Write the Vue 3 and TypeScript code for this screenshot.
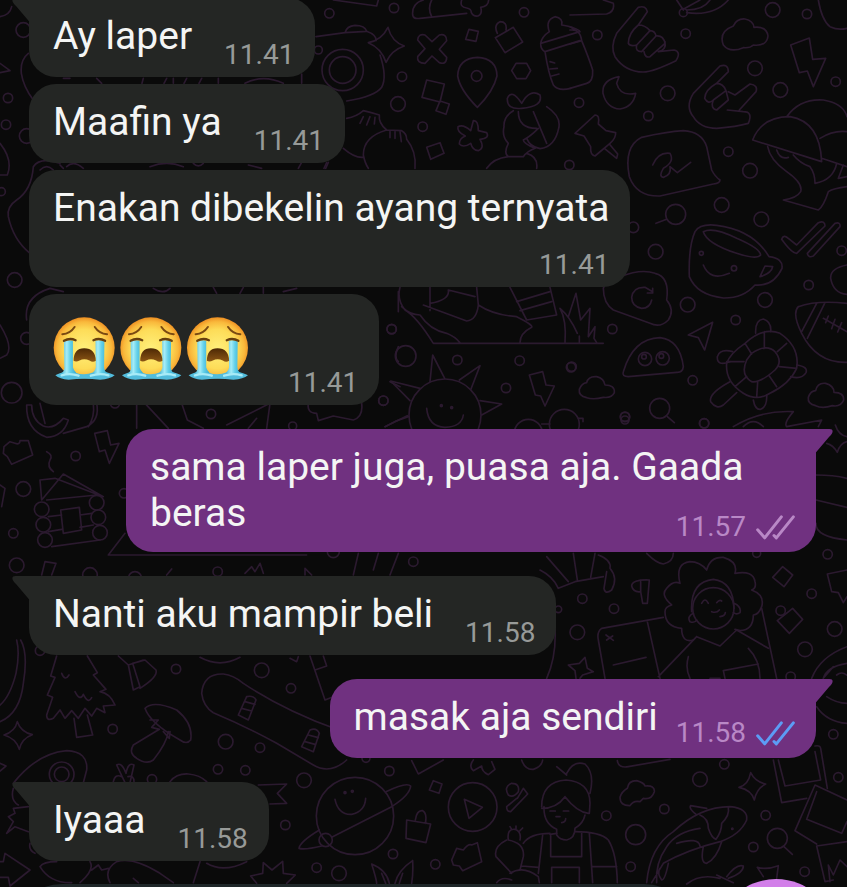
<script setup lang="ts">
interface Message {
  id: number
  text?: string
  emoji?: number
  time: string
  mine?: boolean
  receipt?: 'delivered' | 'read'
  first?: boolean
  layout?: 'stacked' | 'wrapped'
}

interface Panel {
  x: number
  y: number
  circles: number[][]
  paths: string[]
}

const messages: Message[] = [
  { id: 1, text: 'Ay laper', time: '11.41', first: true },
  { id: 2, text: 'Maafin ya', time: '11.41' },
  { id: 3, text: 'Enakan dibekelin ayang ternyata', time: '11.41', layout: 'stacked' },
  { id: 4, emoji: 3, time: '11.41' },
  { id: 5, text: 'sama laper juga, puasa aja. Gaada beras', time: '11.57', mine: true, receipt: 'delivered', first: true, layout: 'wrapped' },
  { id: 6, text: 'Nanti aku mampir beli', time: '11.58', first: true },
  { id: 7, text: 'masak aja sendiri', time: '11.58', mine: true, receipt: 'read', first: true },
  { id: 8, text: 'Iyaaa', time: '11.58', first: true },
]

// Wallpaper doodles, grouped by region; each region is drawn at three units per pixel.
const panels: Panel[] = [
  {
    x: 0, y: 0,
    circles: [[70, 90, 22], [24, 294, 14], [18, 374, 14], [80, 408, 22], [4, 575, 12], [44, 840, 22]],
    paths: [
      'M0 50Q30 45 35 20M0 190L30 212 0 218M85 160Q60 180 64 220Q70 260 100 300M0 430Q40 480 22 525L0 525',
      'M180 490Q120 470 100 500Q95 570 50 600Q20 620 25 650Q40 720 90 760M120 510q20-20 40 0',
      'M190 235h20M290 235l15 15M430 235l-4 15M500 235l-8 15M520 235v15M560 235l-8 15M605 235l-8 15M655 235v15M735 250Q790 222 850 250M905 222v28',
      'M180 495l10 10M200 500q20-20 50 5M450 500q50-20 100 0M580 490q15 15 30 0M745 495l40 10M895 505l10-18M980 488l-8 17',
    ],
  },
  {
    x: 300, y: 0,
    circles: [[88, 40, 14], [282, 24, 14], [672, 37, 14], [306, 230, 14], [294, 312, 22], [368, 380, 14], [808, 495, 14], [55, 150, 12], [128, 210, 62], [128, 210, 40], [530, 228, 16]],
    paths: [
      'M100 0L230 18 235 0M370 0Q335 10 338 45Q340 58 360 55L500 40M395 0Q382 25 395 50M485 0Q478 22 500 24Q514 26 514 38Q520 50 534 48Q548 42 542 22Q565 20 566 0',
      'M48 110L135 98Q140 78 165 76Q195 76 200 94Q230 105 228 122M240 165Q262 230 245 262Q225 290 140 303M135 98L200 94',
      'M264 82Q275 125 313 138Q275 150 258 187Q245 145 205 128Q245 120 264 82Z',
      'M353 120Q355 100 375 105L396 125 418 105Q440 100 440 122L418 148 440 172Q440 195 418 188L396 168 375 190Q350 190 353 170L375 146Z',
      'M507 88L535 94 528 124 497 118ZM586 113L640 82 668 126 615 158ZM592 100Q580 75 600 65Q622 65 618 90',
      'M532 322Q480 270 473 228Q475 175 532 172Q590 175 591 228Q580 275 532 322Z',
      'M648 190L680 190 692 212 678 236 650 236 635 212ZM380 240L433 252 420 306 366 292ZM420 303L448 312 438 343 408 332ZM380 442L420 428 432 460 392 478Z',
      'M748 95Q735 60 765 50Q790 55 785 75Q820 80 838 92M748 95Q725 110 722 130L840 95M722 130Q722 150 735 155L840 122M735 155Q745 220 760 255Q775 275 812 265M750 185l14 4M750 207l22-2M755 228l22-6',
      'M520 362Q535 360 535 392L560 398Q570 415 540 418Q555 445 535 452Q518 452 512 430Q490 445 478 432Q478 415 496 408Q470 395 474 380Q490 372 512 392Z',
      'M665 325Q620 330 622 295Q635 265 665 310Q690 265 720 285Q730 320 665 325M640 332Q610 350 612 380Q605 410 625 430Q610 460 625 470L670 470Q680 455 705 445Q670 430 670 420Q690 410 715 385M655 335Q655 385 710 385M740 320Q785 350 776 385Q765 440 720 446Q690 440 680 415M700 335L740 430M625 470Q580 475 560 505M680 460Q715 470 710 505',
      'M140 355Q170 350 190 332Q215 338 238 345Q235 370 260 390M190 350l-10 20M210 350l-10 25M225 352l-2 20M260 390Q190 410 190 465Q195 490 205 505M260 390L305 392Q320 400 320 418Q350 455 345 505M270 395v18M285 395v20M300 395l4 30M130 445Q165 475 190 472M85 487l-8 18',
    ],
  },
  {
    x: 570, y: 0,
    circles: [[608, 30, 22], [711, 42, 14], [347, 101, 14], [82, 105, 14], [555, 205, 22], [631, 270, 22], [797, 245, 14], [293, 280, 22], [235, 348, 14], [27, 308, 14], [475, 455, 14], [540, 512, 22], [455, 615, 22], [317, 643, 30], [574, 658, 22], [340, 38, 12]],
    paths: [
      'M0 45L110 42Q135 35 130 10L100 0M320 0l20 30M345 25L390 0M350 38Q430 50 475 0M350 30Q400 30 420 0',
      'M205 75L232 35Q228 15 205 22L140 100Q120 140 135 170Q165 215 220 216Q250 215 318 182Q335 155 312 150L265 155M205 75Q175 100 175 130Q180 140 200 135L240 92Q225 75 205 75M200 135Q195 155 215 155L258 108Q255 92 240 92M222 155Q225 175 240 170L285 130Q280 105 258 108M265 155Q290 150 285 125',
      'M490 78Q500 55 525 57Q550 62 552 82Q590 78 594 108Q590 140 550 135Q540 145 520 143Q480 160 460 135Q445 95 490 78Z',
      'M662 135L718 114 728 178 767 175 730 260 712 213 688 218ZM147 230Q95 240 99 280Q110 325 150 327Q190 320 197 280Q150 290 140 250ZM745 0Q755 60 780 80Q805 92 831 85',
      'M0 90Q30 85 35 122L0 132M35 122Q55 170 68 210Q70 245 50 250L0 265M0 80L20 92',
      'M440 250L475 215Q475 190 450 198L370 280Q345 320 370 350Q390 385 440 385Q500 380 535 370Q550 335 520 335L472 330M440 250Q405 270 404 295Q415 315 430 300L468 272Q460 250 440 250M430 300Q420 325 440 330L475 300 468 272M475 275L495 285 540 252Q565 255 558 275L508 330',
      'M15 400L75 345Q90 345 85 372L108 392 137 398Q138 415 120 430L75 468Q60 465 62 440L42 408ZM103 445L140 475 143 462 118 432',
      'M215 412Q290 395 340 392Q395 395 410 440L425 510Q435 530 450 540Q450 550 430 552L270 588Q200 590 178 530Q160 440 215 412ZM248 495Q265 455 300 460Q315 485 280 505Q265 530 280 532Q305 525 300 500L322 518 362 487',
      'M548 420Q575 350 660 350Q750 365 755 485ZM650 350Q690 295 760 300Q820 310 831 350M750 415Q790 390 831 395M755 475L831 500M593 440Q600 480 650 515Q700 550 692 575Q680 595 640 600L745 630Q760 620 775 575Q790 565 831 560M620 450q10 30 35 22M670 465Q690 490 720 500Q735 520 735 550Q790 540 800 490M820 495L805 535 831 530',
    ],
  },
  {
    x: 570, y: 210,
    circles: [[257, 125, 22], [190, 52, 16], [815, 122, 14], [716, 225, 14], [585, 270, 22], [353, 284, 22], [497, 330, 14], [127, 357, 14], [368, 511, 14], [165, 620, 14], [402, 640, 14], [5, 470, 14], [225, 447, 20], [278, 445, 20], [222, 440, 7], [274, 438, 7], [269, 595, 30], [394, 130, 6], [492, 175, 8]],
    paths: [
      'M290 28L258 40M292 620L313 638',
      'M375 65Q390 40 440 46Q550 60 597 140Q640 145 636 175Q610 230 555 225Q520 265 460 264Q380 255 358 200Q355 110 375 65ZM400 65Q430 50 500 85Q570 115 572 135Q560 150 500 130Q410 100 400 65ZM400 165Q420 215 478 190M570 200L585 168 608 170Q605 190 570 200Z',
      'M635 88Q640 72 655 85L680 105 745 38Q765 30 765 48L680 130Q665 130 635 88ZM712 130L795 40Q812 35 810 50L730 138Q715 145 712 130ZM831 165Q780 175 782 205Q790 250 831 253',
      'M685 290Q740 270 831 280M685 290Q665 310 695 370Q740 460 831 457M740 280L695 365M765 278L712 385M760 325L831 365M775 318l-8 20M795 328l-10 28M815 338l-12 28',
      'M100 235Q105 210 150 200Q215 175 255 190Q300 200 290 270Q315 300 295 330Q270 355 240 340L130 300Q100 280 100 235ZM245 270Q240 295 215 295Q185 290 185 262Q190 230 225 232L248 245M248 235v14h-16',
      'M428 337L355 375 385 383 404 420ZM160 485Q190 385 270 383Q330 390 340 470Q338 488 320 487L175 500Q155 500 160 485Z',
      'M525 400Q580 350 630 370Q690 410 680 475Q660 520 600 550Q560 575 520 550Q465 515 470 460Q480 430 525 400ZM545 430Q590 400 615 425Q640 455 615 480Q570 520 545 515Q510 495 530 450ZM583 365v50M525 400l20 32M650 400l-28 25M470 455h52M680 475l-52-5M495 530l35-30M560 562l3-46M620 530l-22-32',
      'M557 370Q555 330 580 327Q605 335 602 365M480 455Q440 470 442 440Q450 415 488 425M680 465Q715 470 708 488Q695 510 662 500M480 515Q415 550 422 575Q440 600 460 585L500 548M550 570Q555 600 572 598Q592 590 590 555',
      'M737 542Q742 517 767 520Q792 527 792 547Q822 547 821 570Q812 592 787 587Q757 597 737 587Q712 582 715 562Q722 542 737 542Z',
      'M490 650Q570 600 670 605Q640 640 650 650L755 630 745 650M520 650q30-30 60 0',
    ],
  },
  {
    x: 370, y: 270,
    circles: [[65, 178, 14], [107, 258, 31], [262, 270, 14], [449, 272, 14], [603, 292, 14], [408, 354, 14], [40, 392, 14], [765, 441, 14], [225, 435, 108], [214, 407, 3], [245, 413, 3], [583, 463, 45], [475, 490, 42]],
    paths: [
      'M90 52Q80 90 105 120Q140 140 190 220H700M95 110Q120 135 150 135Q180 180 230 190Q255 200 270 218M180 52v70M160 105L290 153Q320 150 325 105L320 52M180 100Q240 90 235 60L315 80M325 105Q370 135 440 140Q490 165 485 172Q450 190 450 218M420 52L470 150 560 135 540 52M440 95L540 65M450 122L545 95',
      'M570 115Q590 150 585 218M570 115Q600 140 622 190M595 140L618 70 632 150 660 115 655 200 675 170 672 205 680 218M628 218v-20',
      'M180 335L188 255 224 325M268 330L330 287 303 357M330 392L395 402 335 435M150 355L62 333 120 392M112 437L45 470M170 415Q175 470 225 472Q275 470 280 435',
      'M478 315L518 305 528 345 553 348 525 408 512 378 496 375ZM650 338Q655 318 680 320Q702 325 705 345Q735 345 733 368Q725 385 700 382Q670 390 650 383Q625 378 628 358Q635 340 650 338ZM515 462h25M625 445h14v10',
    ],
  },
  {
    x: 0, y: 280,
    circles: [[80, 175, 18], [35, 338, 31], [345, 370, 14], [633, 402, 14], [1150, 362, 14], [1175, 147, 14]],
    paths: ['M0 135Q40 200 20 225L0 235M80 120Q70 50 150 25L190 35M1195 35v60M1195 200Q1180 230 1195 245M1170 305l30 15M460 25q30 20 50 0M640 22l10 18M720 40l10-18M790 22v18M850 35l40-10'],
  },
  {
    x: 0, y: 400,
    circles: [[70, 267, 22], [227, 168, 14], [40, 400, 14], [50, 496, 22], [125, 328, 22], [130, 374, 22], [135, 420, 22], [290, 308, 22], [295, 352, 22], [300, 398, 22], [372, 280, 14], [653, 515, 14], [1240, 485, 14], [878, 78, 12], [270, 525, 22], [405, 535, 20], [1000, 455, 18]],
    paths: [
      'M80 15Q78 90 140 112Q190 110 205 60L190 55Q160 90 130 78Q95 60 95 15ZM120 10L135 70M190 100L260 80Q300 60 290 10M280 10Q285 50 265 80',
      'M284 100L322 92 332 135 357 130 328 190 315 150 298 155ZM12 140L30 125 45 130Q60 135 60 122L85 122 98 165 35 193 22 170 10 160ZM140 155Q160 165 150 180Q140 200 160 215',
      'M165 235L120 240L125 300 190 222 310 290ZM140 300L290 285M145 350L185 345M145 395L185 388M240 345L275 340M240 382L280 375M182 330L238 322 245 390 190 400ZM155 440L300 420M375 400L325 465H920',
      'M0 255L15 265 5 320M125 525L135 485 168 490 155 525M410 10V85M435 10L505 85M545 10L562 60 610 85M680 75L810 10 800 85M745 85L770 55M925 10Q920 40 950 40L955 62 1000 48 1060 60Q1090 50 1085 10M1155 80Q1190 60 1225 50',
      'M735 520l20-20 10 15 15-25 10 30M1060 525L1075 460M1120 510L1135 460M1170 525L1195 460M915 525V505L935 525M500 525l15-18',
    ],
  },
  {
    x: 600, y: 420,
    circles: [[683, 403, 14], [313, 10, 14], [75, 0, 12]],
    paths: ['M706 15Q715 45 741 50M680 70Q700 75 712 97Q720 70 741 65M648 165Q700 165 741 175M648 240L741 262M648 310Q645 350 741 360'],
  },
  {
    x: 540, y: 540,
    circles: [[127, 176, 14], [222, 206, 14], [112, 277, 22], [815, 161, 14], [884, 267, 22], [795, 328, 22], [752, 410, 14], [880, 583, 14], [650, 40, 12], [55, 208, 10], [722, 212, 14], [520, 205, 62]],
    paths: [
      'M0 90Q40 110 55 145L105 125 190 110M20 50L85 125M100 40L112 120M165 40L152 112M175 45Q215 60 210 85Q235 115 215 150Q195 165 192 145L200 95M320 40Q350 70 370 72Q400 65 400 40',
      'M328 120Q275 118 275 138Q280 158 302 155L308 190H322L328 120M302 125V155',
      'M425 265Q375 260 375 215Q375 200 395 195Q360 165 380 145Q400 120 420 130Q405 70 450 65Q480 65 500 90Q510 50 550 52Q595 65 585 100Q640 90 645 125Q650 145 635 150Q675 165 665 200Q655 225 640 225Q640 270 600 272L585 268M425 265Q425 310 460 300M455 215Q450 125 520 118Q580 125 582 205M460 220Q440 230 450 245Q465 250 470 240M582 190Q605 200 600 218Q590 225 580 218M515 215Q530 220 538 210M540 230Q555 228 556 218M485 190q10-20 20 0M530 188q8-10 15-5',
      'M470 290L355 410M470 290L540 318 590 270 685 325M445 350Q435 385 450 415M625 325Q660 360 660 415M555 415L550 392 655 372M510 415h30M665 205L710 415M370 232L185 265Q170 275 175 300L195 415M322 245L360 415M220 375L318 352M198 285l22 16M200 300l18-12',
      'M108 415L105 392 85 375 118 370 135 352 142 385 160 395 128 405 120 415M728 80L758 105 732 140 698 112ZM758 205L788 238 748 280 712 242ZM921 90L862 102 875 155 895 158 910 188 921 170',
      'M921 320Q840 350 815 415M921 370Q860 380 850 415L880 380M830 500Q860 545 921 550M860 470Q890 490 921 490M890 405q15-12 30 0M45 260Q50 350 20 415',
    ],
  },
  {
    x: 0, y: 640,
    circles: [[528, 87, 14], [785, 91, 22], [873, 145, 14], [338, 267, 14], [677, 305, 22], [780, 323, 14], [654, 388, 14], [736, 391, 14], [185, 403, 37], [185, 403, 22], [120, 32, 14], [456, 418, 14]],
    paths: [
      'M50 0Q60 40 48 100Q30 170 0 195M62 0Q85 40 70 130Q60 220 0 245',
      'M170 48L152 108 165 112 142 165 158 172 140 225Q140 245 160 235L180 210 195 235 215 212 235 235 255 205 275 228 290 205 315 218 310 198 345 195Q330 160 300 155L318 148 280 105 292 98 262 48M222 235L230 292 278 285 262 225M185 100q10 25 22 5M225 155q15 30 25 8q15 30 25 10',
      'M355 48L385 75 400 150 420 140 398 70 435 60 468 90Q475 110 420 145M385 75L430 60',
      'M435 205Q460 180 530 210Q580 250 572 300Q560 315 540 300Q450 250 435 205ZM450 240L475 240 455 262 478 268M478 268L400 315Q385 340 410 355Q440 375 460 360Q500 310 505 275M490 275l18 20 2-20',
      'M605 160Q610 100 670 102Q700 105 730 130Q850 210 1010 268M605 160Q610 200 640 218Q740 260 830 310L940 375Q990 405 1040 360M740 170Q760 165 768 180L745 240 715 225ZM735 185l30 8M725 205l30 8M930 270Q950 262 958 280L940 335 905 320ZM925 285l30 8M915 305l30 8',
      'M930 48L975 180 1000 170M945 90L980 78 970 48M870 55l20 10 5-15M600 52Q660 85 720 52',
      'M52 245Q62 275 97 284Q65 295 58 328Q48 295 12 285Q45 275 52 245Z',
      'M40 430Q110 340 200 332Q265 335 260 390L250 428M40 445Q30 480 55 495M85 500L40 505 45 520 25 530 40 545 20 580 45 560 85 575M0 370l18 8-18 15',
      'M375 428L350 375Q365 365 378 400Q385 365 402 375L390 428M340 425q5-25 25-15M402 425q0-20-18-15M510 425Q530 400 565 402Q600 405 620 425M775 435L860 432 832 460 860 490 810 492',
      'M0 665H10L15 640 90 690 30 738 25 712H0M120 680Q130 665 170 665M120 680Q150 730 215 728M270 665Q285 690 240 728M275 690l20-15 10 15 20-5M330 728Q310 690 350 665Q400 650 480 700L520 728M400 715l15 13M600 665L580 728M620 670Q670 700 740 665M90 610Q85 630 105 640',
    ],
  },
  {
    x: 260, y: 740,
    circles: [[132, 121, 22], [388, 93, 14], [76, 255, 14], [170, 383, 14], [237, 400, 22], [399, 342, 14], [526, 373, 14], [285, 228, 116], [197, 300, 20], [638, 201, 73], [255, 158, 3], [277, 154, 3], [318, 55, 12]],
    paths: [
      'M225 178Q235 225 275 223Q315 215 317 175M378 155Q440 125 452 138Q450 165 395 200L215 292M178 270Q120 305 117 325Q135 330 185 318',
      'M440 240L512 252 498 308 438 295ZM466 240Q470 210 488 212Q502 220 496 250M520 122L546 132 537 160 508 150ZM613 178L667 202 627 235ZM455 62L475 102 550 60M640 60Q625 80 640 92L665 78Q665 95 685 104L705 88 695 65',
      'M770 175L740 200Q740 215 752 215L803 162 790 145 772 175M745 165Q730 140 755 130Q780 130 775 155Q760 175 745 165M575 360L590 325 610 330Q625 310 635 315L652 308 665 365 608 392 598 378 580 375Z',
      'M335 372Q350 420 350 430M335 372Q380 390 388 430M458 362Q460 400 455 430M458 362Q415 390 405 430M365 400l12 30M428 400l-10 30M-10 430L-28 408 8 400 10 368 36 390 68 364 70 400 106 405 80 430M785 60Q795 90 820 88Q845 80 848 60',
      'M790 310Q810 280 870 280M740 300Q700 320 708 350L755 400M745 300Q795 310 790 350L780 390M750 400Q790 375 835 410L838 428M785 378L835 382M848 285L835 400M745 300Q740 265 765 268Q785 275 780 300M710 428q15-20 45-8M755 268l-5-8M768 266v-8M780 272l8-8',
    ],
  },
  {
    x: 540, y: 740,
    circles: [[553, 73, 14], [480, 118, 22], [895, 112, 14], [199, 227, 14], [373, 207, 14], [287, 284, 30], [272, 380, 14], [640, 321, 14], [712, 295, 30], [794, 395, 14], [677, 226, 14], [577, 266, 2]],
    paths: [
      'M78 120Q150 125 150 190L148 220M5 200Q5 125 78 120M75 170Q50 205 5 205M75 170Q110 215 145 220M12 200Q10 250 50 268V285Q60 300 80 300Q105 295 105 265Q130 250 135 225M80 100Q100 60 135 72Q165 100 150 160M50 80l30 25M30 213h16M70 213h16M48 230h12M65 248q12-2 12-12',
      'M30 283L50 280M105 275Q180 275 205 300Q230 340 232 428M32 285V350H125V280M148 280L158 428M35 428V382H118V428M158 380h72M232 62Q235 85 265 80L390 58',
      'M262 145Q265 122 290 122Q312 128 315 138Q345 135 343 155Q335 180 310 175L300 185Q280 180 270 197Q240 198 240 172Q245 155 262 145ZM632 98Q645 125 677 132Q650 145 643 180Q635 150 597 142Q625 135 632 98Z',
      'M700 60L725 188 800 175M715 60L735 138 842 120 825 35M862 145L842 25Q840 15 825 18M825 135L765 272 830 312M825 135L921 180M830 155L800 238 905 280 921 245M921 305L830 318 855 425 880 420M865 375L880 405 900 360 921 380M865 375L870 425',
      'M320 428Q330 320 400 275Q480 200 570 200Q625 205 620 240Q600 285 540 305Q440 330 370 370L335 428M470 225Q445 205 452 197L500 205M480 225Q505 235 505 265Q515 295 528 298Q545 275 545 250Q570 225 565 203M350 428Q345 370 380 320Q410 275 480 265M410 310Q475 290 480 318M490 320Q480 370 500 370Q530 355 545 305M385 370Q375 420 365 420Q350 400 360 385',
      'M732 320L757 343M652 382Q680 390 715 377L710 415M652 382L670 410M440 432Q480 400 540 415M530 405L580 428M560 410Q590 370 610 378Q610 400 565 415',
    ],
  },
]
</script>

<template>
  <div class="chat">
    <svg class="wallpaper" viewBox="0 0 847 887" preserveAspectRatio="xMinYMin slice" aria-hidden="true">
      <g v-for="(panel, p) in panels" :key="p" :transform="`translate(${panel.x} ${panel.y}) scale(0.33333)`">
        <circle v-for="(c, i) in panel.circles" :key="`c${i}`" :cx="c[0]" :cy="c[1]" :r="c[2]" />
        <path v-for="(d, i) in panel.paths" :key="`p${i}`" :d="d" />
      </g>
    </svg>

    <main class="thread">
      <article
        v-for="m in messages"
        :key="m.id"
        class="bubble"
        :class="[m.mine ? 'outgoing' : 'incoming', m.layout, { first: m.first, media: m.emoji }]"
      >
        <svg v-if="m.first" class="tail" viewBox="0 0 18 25" aria-hidden="true">
          <path d="M18 0H3.500Q-1 0 1 4.500Q2 6 4 8L18 24.500Z" />
        </svg>
        <p v-if="m.text" class="text">{{ m.text }}</p>
        <svg v-if="m.emoji" class="emoji" viewBox="0 0 590 190" role="img" aria-label="😭😭😭">
          <defs>
            <radialGradient id="face" cx="0.5" cy="0.52" r="0.52">
              <stop offset="0" stop-color="#fff07c" />
              <stop offset="0.62" stop-color="#fddc58" />
              <stop offset="0.86" stop-color="#f9b83b" />
              <stop offset="1" stop-color="#ee8f22" />
            </radialGradient>
            <linearGradient id="tear" x1="0" x2="1" y1="0" y2="0">
              <stop offset="0" stop-color="#4cb9d8" />
              <stop offset="0.35" stop-color="#a5ecf7" />
              <stop offset="0.6" stop-color="#62d0e9" />
              <stop offset="1" stop-color="#36a9cf" />
            </linearGradient>
            <linearGradient id="mouth" x1="0" x2="0" y1="0" y2="1">
              <stop offset="0" stop-color="#4c2805" />
              <stop offset="1" stop-color="#8b5514" />
            </linearGradient>
          </defs>
          <g v-for="n in m.emoji" :key="n" :transform="`translate(${(n - 1) * 201} 0)`">
            <circle cx="92" cy="93" r="92" fill="url(#face)" />
            <path d="M26 52Q50 50 63 30M124 30Q137 50 161 52" fill="none" stroke="#7a4a12" stroke-width="6" stroke-linecap="round" />
            <path d="M5 176Q16 168 38 164Q60 158 66 168Q92 178 120 167Q128 158 148 164Q172 168 184 176Q170 188 140 189Q92 184 45 189Q18 188 5 176Z" fill="#52bcdc" />
            <path d="M31 74Q44 67 58 72V152Q60 160 68 168Q50 178 24 170Q34 160 32 150Z" fill="url(#tear)" />
            <path d="M126 72Q140 67 153 74L152 150Q152 162 162 170Q136 178 118 168Q126 160 127 152Z" fill="url(#tear)" />
            <path d="M24 176Q50 168 75 177M112 177Q140 168 165 176" fill="none" stroke="#a8ebf7" stroke-width="7" stroke-linecap="round" />
            <path d="M31 72Q48 62 66 70M120 70Q138 62 155 72" fill="none" stroke="#67400f" stroke-width="7" stroke-linecap="round" />
            <path d="M60 132Q60 94 92 94Q126 94 127 132Q118 138 108 131Q92 124 78 131Q68 137 60 132Z" fill="url(#mouth)" />
          </g>
        </svg>
        <span class="meta">
          <time>{{ m.time }}</time>
          <svg v-if="m.receipt" class="ticks" :class="m.receipt" viewBox="0 0 117 74" role="img" :aria-label="m.receipt">
            <path d="M5 44L26 68 76 5M54 61L61 68 112 5" />
          </svg>
        </span>
      </article>
    </main>

    <footer class="composer">
      <input class="field" type="text" aria-label="Pesan" />
      <button class="mic" type="button" aria-label="Rekam"></button>
    </footer>
  </div>
</template>

<style>
body {
  margin: 0;
  background: #0a0a0a;
}
</style>

<style scoped>
.chat {
  position: relative;
  height: 100vh;
  overflow: hidden;
  background: #0a0a0a;
  font-family: Roboto, "Liberation Sans", sans-serif;
}

.wallpaper {
  position: absolute;
  inset: 0;
  width: 100%;
  height: 100%;
  fill: none;
  stroke: #2b1a2f;
  stroke-width: 5;
  stroke-linejoin: round;
  stroke-linecap: round;
}

.thread {
  position: relative;
  display: flex;
  flex-direction: column;
  padding: 0 31px 0 29px;
}

.bubble {
  position: relative;
  box-sizing: border-box;
  display: flex;
  align-items: flex-end;
  gap: 32px;
  max-width: calc(100% - 97px);
  margin-top: 7px;
  padding: 15px 21px 0 24px;
  border-radius: 27px;
  color: #f4f5f4;
}

.bubble.first {
  margin-top: 24px;
}

.bubble.first:first-child {
  margin-top: -2px;
}

.incoming {
  align-self: flex-start;
  background: #242624;
}

.incoming.first {
  border-top-left-radius: 0;
}

.outgoing {
  align-self: flex-end;
  gap: 18px;
  background: #703180;
}

.outgoing.first {
  border-top-right-radius: 0;
}

.tail {
  position: absolute;
  top: 0;
  left: -17px;
  width: 18px;
  height: 25px;
  fill: #242624;
}

.outgoing .tail {
  left: auto;
  right: -17px;
  fill: #703180;
  transform: scaleX(-1);
}

.text {
  margin: 0;
  padding-bottom: 18px;
  font-size: 39px;
  line-height: 46px;
}

.meta {
  display: flex;
  align-items: center;
  gap: 10px;
  padding-bottom: 5px;
  color: #979a98;
  font-size: 28px;
  line-height: 34px;
  white-space: nowrap;
}

.outgoing .meta {
  padding-bottom: 8px;
  color: #b988c6;
}

.stacked {
  flex-direction: column;
  gap: 0;
}

.stacked .text {
  padding-bottom: 17px;
}

.wrapped {
  display: flow-root;
}

.wrapped .text {
  display: inline;
}

.wrapped .meta {
  float: right;
  margin-top: 20px;
}

.media {
  padding-top: 23px;
  gap: 38px;
}

.emoji {
  width: 197px;
  height: 63px;
  margin-bottom: 25px;
}

.ticks {
  width: 39px;
  height: 25px;
  fill: none;
  stroke: currentColor;
  stroke-width: 9;
  stroke-linecap: round;
  stroke-linejoin: round;
}

.ticks.read {
  color: #5c9cf5;
}

.composer {
  position: relative;
  display: flex;
  align-items: flex-start;
  gap: 20px;
  margin-top: 18px;
  padding: 0 11px 0 10px;
}

.field {
  flex: 1;
  min-width: 0;
  height: 104px;
  box-sizing: border-box;
  margin: 5px 0 0;
  padding: 0 40px;
  border: 0;
  border-radius: 52px;
  background: #1f2729;
  color: #f4f5f4;
  font: inherit;
}

.mic {
  flex: none;
  width: 120px;
  height: 120px;
  padding: 0;
  border: 0;
  border-radius: 50%;
  background: #d27fe9;
}
</style>
